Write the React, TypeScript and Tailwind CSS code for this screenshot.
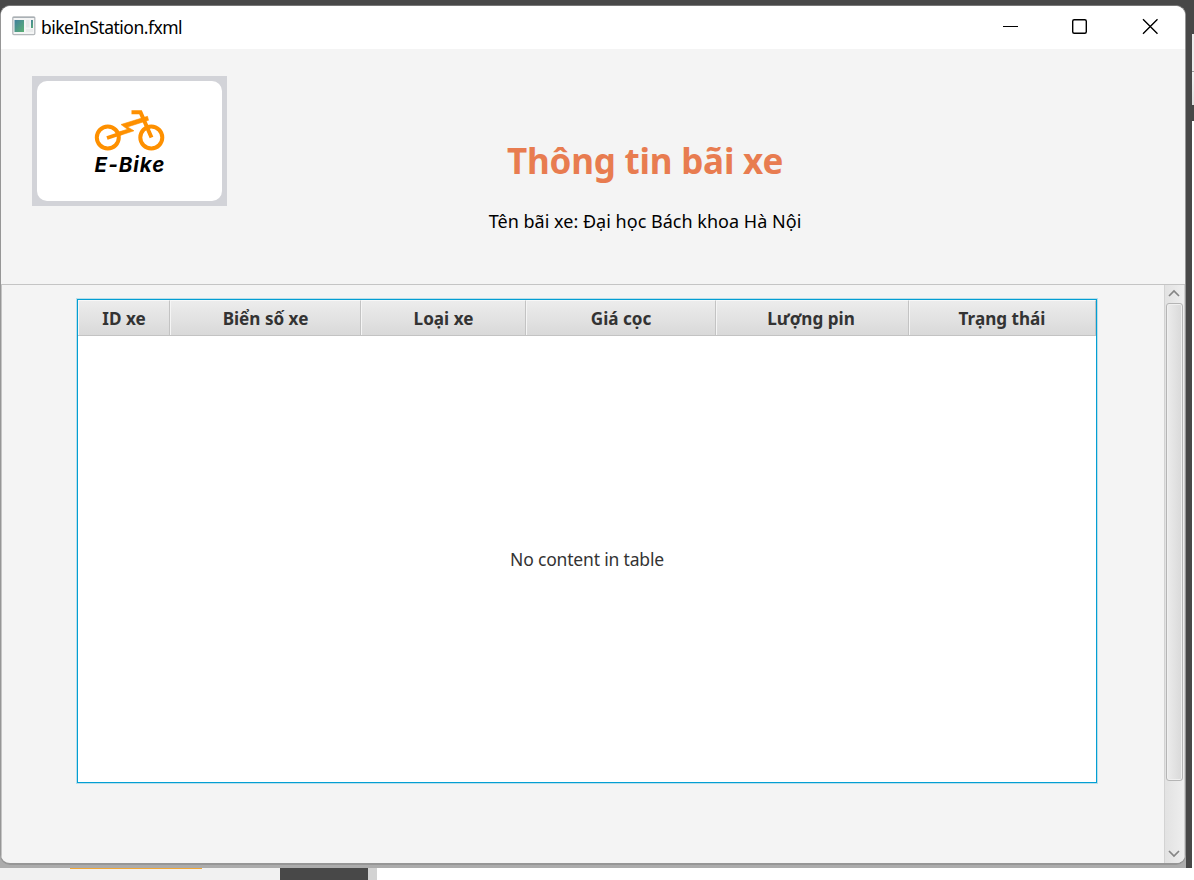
const columns = [
  { label: 'ID xe', cls: 'w-[92px]' },
  { label: 'Biển số xe', cls: 'w-[191px]' },
  { label: 'Loại xe', cls: 'w-[165px]' },
  { label: 'Giá cọc', cls: 'w-[190px]' },
  { label: 'Lượng pin', cls: 'w-[193px] pr-[3px]' },
  { label: 'Trạng thái', cls: 'w-[187px] pr-px' },
];

function AppIcon() {
  return (
    <svg width="24" height="20" viewBox="0 0 24 20" className="block">
      <rect x="0.8" y="0.8" width="22" height="17.8" rx="1" fill="#f4f5f5" stroke="#b4b8bb" strokeWidth="1.3" />
      <path d="M1 1.5H23" stroke="#a9b0b5" />
      <defs>
        <linearGradient id="pane" x1="0" y1="0" x2="1" y2="1">
          <stop offset="0" stopColor="#417f9c" />
          <stop offset="1" stopColor="#5bb174" />
        </linearGradient>
      </defs>
      <rect x="2.5" y="4" width="9.5" height="12" fill="url(#pane)" />
      <rect x="14" y="4" width="3.5" height="7.5" fill="#e6e8e9" />
      <rect x="14" y="13" width="7" height="3" fill="#e9ebeb" />
      <rect x="19" y="4" width="2" height="8" fill="url(#pane)" />
    </svg>
  );
}

function TitleBar() {
  return (
    <div className="flex h-[43px] shrink-0 items-start bg-white">
      <div className="ml-[11px] mt-[10px]">
        <AppIcon />
      </div>
      <div className="ml-[5px] mt-[9px] whitespace-nowrap text-[17.5px] leading-6 tracking-[-0.5px] text-black">bikeInStation.fxml</div>
      <svg className="ml-auto mr-[26px] mt-[12px] block" width="156" height="17" viewBox="0 0 156 17" fill="none" stroke="#000" strokeWidth="1.4">
        <path d="M0 8.5H15" strokeWidth="1" />
        <rect x="69.7" y="1.7" width="13.6" height="13.6" rx="1.5" />
        <path d="M140 1.2L154.5 15.7M154.5 1.2L140 15.7" />
      </svg>
    </div>
  );
}

function Logo() {
  return (
    <div className="ml-[31px] mt-[27px] h-[130px] w-[195px] shrink-0 bg-[#d2d3d8] p-[5px]">
      <div className="flex h-full flex-col items-center rounded-[10px] bg-white pt-[27px]">
        <svg width="72" height="44" viewBox="94 108 72 44" fill="none" stroke="#fe9000" className="block">
          <circle cx="107.8" cy="137.5" r="11" strokeWidth="4" />
          <circle cx="151.3" cy="137.5" r="11" strokeWidth="4" />
          <path d="M131.5 112.2H140.5L151.5 137.5" strokeWidth="4" />
          <path d="M107 138L122 133" strokeWidth="3.8" />
          <path d="M147.5 116.3L121 124.5L127.5 129.3L117.5 132.3V136.2L134 130.8L127.5 126.9L148.5 120.3Z" fill="#fe9000" strokeWidth="0.6" />
        </svg>
        <div className="mt-px whitespace-nowrap pl-px font-['Inter','Liberation_Sans',sans-serif] text-[20.5px] font-bold italic leading-6 tracking-[1px] text-black">E-Bike</div>
      </div>
    </div>
  );
}

function Table() {
  return (
    <div className="ml-[74px] mt-[13px] flex h-[486px] w-[1022px] shrink-0 flex-col border border-[#b9dfea]">
      <div className="flex min-h-0 flex-1 flex-col border border-[#039ed3] bg-white">
        <div className="flex h-[36px] shrink-0 border-b border-[#c3c3c3] bg-linear-to-b from-[#ededed] to-[#d9d9d9]">
          {columns.map((c) => (
            <div
              key={c.label}
              className={`${c.cls} flex shrink-0 items-center justify-center whitespace-nowrap border-l border-r border-t border-l-[#f5f5f5] border-r-[#c3c3c3] border-t-[#f8f8f8] pt-[2px] text-[17.1px] font-bold text-[#333]`}
            >
              {c.label}
            </div>
          ))}
        </div>
        <div className="flex flex-1 items-center justify-center pt-px text-[17.5px] tracking-[-0.18px] text-[#333]">No content in table</div>
      </div>
    </div>
  );
}

function ScrollBar() {
  return (
    <div className="flex w-[21px] shrink-0 flex-col items-start border-l border-r border-l-[#d3d3d3] border-r-[#d0d0d0] bg-linear-to-r from-[#e2e2e2] to-[#eeeeee]">
      <svg width="19" height="18" viewBox="0 0 19 18" fill="none" stroke="#858585" strokeWidth="1.7" className="block shrink-0">
        <path d="M4 11L9 6L14 11" />
      </svg>
      <div className="ml-px h-[478px] w-[17px] shrink-0 rounded-[3px] border border-[#b5b5b5] bg-linear-to-r from-[#ececec] to-[#d9d9d9] shadow-[inset_0_0_0_1px_#f0f0f0]" />
      <svg width="19" height="18" viewBox="0 0 19 18" fill="none" stroke="#858585" strokeWidth="1.7" className="mt-auto block shrink-0">
        <path d="M4 6L9 11L14 6" />
      </svg>
    </div>
  );
}

export default function App() {
  return (
    <div className="flex h-[880px] w-[1194px] flex-col overflow-hidden bg-[#484848] font-['Noto_Sans','Open_Sans',sans-serif]">
      <div className="h-[5px] shrink-0" />
      <div className="flex h-[863px] shrink-0">
        <div className="flex w-[1186px] shrink-0 flex-col bg-linear-to-b from-[#484848] from-50% to-[#acacac] to-50%">
          <div className="flex h-[860px] flex-col overflow-hidden rounded-[10px] border border-b-2 border-[#969696] border-t-[#777] bg-[#f4f4f4]">
            <TitleBar />
            <div className="flex h-[235px] shrink-0">
              <Logo />
              <div className="ml-[33px] flex w-[770px] flex-col items-center">
                <div className="mt-[88px] whitespace-nowrap text-[35px] font-bold leading-[48px] tracking-[-0.2px] text-[#e87c50]">Thông tin bãi xe</div>
                <div className="mt-[24px] whitespace-nowrap text-[18px] leading-6 tracking-[0.02px] text-black">Tên bãi xe: Đại học Bách khoa Hà Nội</div>
              </div>
            </div>
            <div className="flex min-h-0 flex-1 border-l border-t border-[#c4c4c4]">
              <div className="min-w-0 flex-1">
                <Table />
              </div>
              <ScrollBar />
            </div>
          </div>
        </div>
        <div className="w-[6px] shrink-0" />
        <div className="flex flex-1 flex-col">
          <div className="h-[29px]" />
          <div className="h-[38px] border-b border-[#999] bg-[#ececec]" />
          <div className="h-[33px] bg-linear-to-b from-[#f3f3f3] to-[#dedede]" />
          <div className="h-[16px]" />
          <div className="flex-1 bg-white" />
        </div>
      </div>
      <div className="flex h-[12px] shrink-0 bg-white">
        <div className="w-[280px] bg-[#f1f1f1] pl-[70px]">
          <div className="h-px w-[132px] bg-[#f0a637]" />
        </div>
        <div className="w-[88px] bg-[#484848]" />
        <div className="w-[9px] bg-[#d3d3d3]" />
      </div>
    </div>
  );
}
